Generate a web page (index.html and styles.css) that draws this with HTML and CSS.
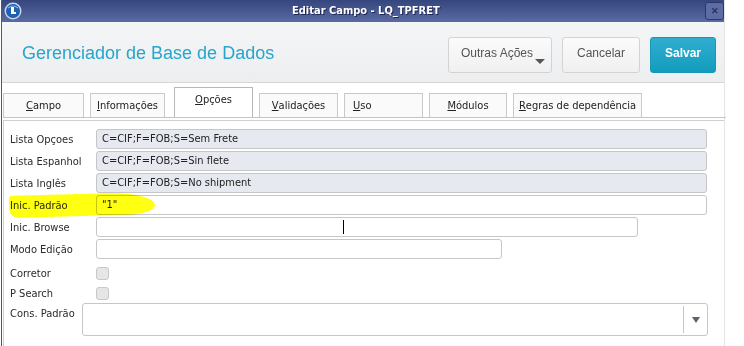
FILE: index.html
```html
<!DOCTYPE html>
<html lang="pt-BR">
<head>
    <meta charset="UTF-8">
    <title>Editar Campo - LQ_TPFRET</title>
    <link rel="stylesheet" href="styles.css">
</head>
<body>
    <div class="window">
        <div class="titlebar">
            <span class="logo">
                <svg width="18" height="18" viewBox="0 0 18 18">
                    <circle cx="9" cy="9" r="8.5" fill="#c9d3e3"/>
                    <circle cx="9" cy="9" r="7" fill="#1d62b0"/>
                    <path d="M4 6 Q9 2 14 6" stroke="#7fb3e8" stroke-width="1.2" fill="none"/>
                    <rect x="7" y="5" width="3" height="7" fill="#fff"/>
                    <rect x="7" y="10" width="5" height="2" fill="#fff"/>
                </svg>
            </span>
            <span class="title">Editar Campo - LQ_TPFRET</span>
            <span class="close">&#x2715;</span>
        </div>

        <div class="header">
            <h1>Gerenciador de Base de Dados</h1>
            <div class="actions">
                <button class="btn btn-more">Outras Ações<span class="caret"></span></button>
                <button class="btn btn-cancel">Cancelar</button>
                <button class="btn btn-save">Salvar</button>
            </div>
        </div>

        <div class="tabs">
            <div class="tab t-campo"><u>C</u>ampo</div>
            <div class="tab t-info"><u>I</u>nformações</div>
            <div class="tab t-opc active"><u>O</u>pções</div>
            <div class="tab t-valid"><u>V</u>alidações</div>
            <div class="tab t-uso"><u>U</u>so</div>
            <div class="tab t-mod"><u>M</u>ódulos</div>
            <div class="tab t-regras"><u>R</u>egras de dependência</div>
        </div>

        <div class="panel">
            <span class="marker"></span>
            <div class="row">
                <label>Lista Opçoes</label>
                <div class="field readonly w-full">C=CIF;F=FOB;S=Sem Frete</div>
            </div>
            <div class="row">
                <label>Lista Espanhol</label>
                <div class="field readonly w-full">C=CIF;F=FOB;S=Sin flete</div>
            </div>
            <div class="row">
                <label>Lista Inglês</label>
                <div class="field readonly w-full">C=CIF;F=FOB;S=No shipment</div>
            </div>
            <div class="row">
                <label>Inic. Padrão</label>
                <div class="field w-full">"1"</div>
            </div>
            <div class="row">
                <label>Inic. Browse</label>
                <div class="field w-browse"><span class="cursor"></span></div>
            </div>
            <div class="row">
                <label>Modo Edição</label>
                <div class="field w-modo"></div>
            </div>
            <div class="row check-row first">
                <label>Corretor</label>
                <span class="checkbox"></span>
            </div>
            <div class="row check-row">
                <label>P Search</label>
                <span class="checkbox"></span>
            </div>
            <div class="row cons-row">
                <label>Cons. Padrão</label>
                <div class="field select">
                    <span class="select-btn"><span class="arrow"></span></span>
                </div>
            </div>
        </div>
    </div>
</body>
</html>
```

FILE: styles.css
```css
body {
    margin: 0;
    background: #fff;
    font-family: 'Liberation Sans', Arial, sans-serif;
    width: 744px;
    height: 346px;
    overflow: hidden;
}

.window {
    width: 722px;
    height: 346px;
    margin-left: 1px;
    border-left: 1px solid #4a5880;
    border-right: 1px solid #e4e4e4;
}

.titlebar {
    height: 22px;
    background: linear-gradient(#35467f, #5a6aa3);
    display: flex;
    align-items: center;
    position: relative;
}

.logo {
    width: 18px;
    height: 18px;
    margin-left: 2px;
    display: flex;
}

.title {
    position: absolute;
    left: 290px;
    top: 4px;
    color: #fff;
    font-family: 'DejaVu Sans Condensed', 'DejaVu Sans', sans-serif;
    font-weight: bold;
    font-size: 11px;
    text-shadow: 1px 1px 0 #1d2650;
}

.close {
    margin-left: auto;
    margin-right: 0;
    width: 19px;
    height: 18px;
    border: 1px solid #2b3768;
    border-radius: 3px;
    background: #5d6ca4;
    color: #2a3150;
    font-size: 9px;
    font-weight: bold;
    display: flex;
    align-items: center;
    justify-content: center;
    box-sizing: border-box;
}

.header {
    height: 60px;
    background: linear-gradient(#f4f5f6, #eceef0);
    border-bottom: 1px solid #d6d6d6;
    display: flex;
    align-items: center;
    justify-content: space-between;
}

.header h1 {
    margin: 0 0 0 20px;
    font-weight: normal;
    font-size: 18px;
    color: #27a5cb;
    padding-top: 2px;
}

.actions {
    display: flex;
    gap: 10px;
    margin-right: 8px;
    padding-top: 5px;
}

.btn {
    height: 36px;
    border: 1px solid #d3d3d3;
    border-radius: 3px;
    background: linear-gradient(#fbfbfb, #f0f0f0);
    color: #555;
    font-family: 'Liberation Sans', Arial, sans-serif;
    font-size: 12px;
    position: relative;
    padding: 0;
}

.btn-more {
    width: 104px;
    padding: 0 18px 3px 0;
    text-align: right;
}

.caret {
    position: absolute;
    right: 6px;
    bottom: 8px;
    border-left: 5px solid transparent;
    border-right: 5px solid transparent;
    border-top: 5px solid #555;
}

.btn-cancel {
    width: 78px;
    padding-bottom: 3px;
}

.btn-save {
    width: 66px;
    border-color: #1898b8;
    background: linear-gradient(#31add0, #129dbd);
    color: #fff;
    font-weight: bold;
    padding-bottom: 3px;
}

.tabs {
    height: 35px;
    margin-left: 1px;
    display: flex;
    align-items: flex-end;
    border-bottom: 1px solid #c4c4c4;
    box-sizing: border-box;
    margin-right: -2px;
}

.tab {
    height: 24px;
    border: 1px solid #c9c9c9;
    border-bottom: none;
    background: #fafafa;
    font-family: 'DejaVu Sans Condensed', 'DejaVu Sans', sans-serif;
    font-size: 11px;
    color: #222;
    display: flex;
    align-items: center;
    justify-content: center;
    box-sizing: border-box;
    margin-right: 6px;
}

.tab.active {
    height: 30px;
    background: #fff;
    align-items: flex-start;
    padding-top: 5px;
    border-color: #b8b8b8;
}

.t-campo { width: 81px; }
.t-info { width: 75px; margin-right: 9px; }
.t-opc { width: 79px; }
.t-valid { width: 79px; }
.t-uso { width: 79px; justify-content: flex-start; padding-left: 8px; }
.t-mod { width: 78px; }
.t-regras { width: 129px; }

.panel {
    position: relative;
    margin: 2px 0 0 1px;
    border-top: 1px solid #cfcfcf;
    border-left: 1px solid #cfcfcf;
    background: #fff;
    padding: 8px 0 0 6px;
    height: 230px;
    display: flex;
    flex-direction: column;
    gap: 2px;
}

.row {
    display: flex;
    align-items: center;
    height: 20px;
    position: relative;
}

.row label {
    width: 86px;
    font-family: 'DejaVu Sans Condensed', 'DejaVu Sans', sans-serif;
    font-size: 11px;
    color: #2a2a2a;
    flex-shrink: 0;
}

.field {
    height: 20px;
    box-sizing: border-box;
    border: 1px solid #c6c6c6;
    border-radius: 3px;
    background: #fff;
    font-family: 'DejaVu Sans Condensed', 'DejaVu Sans', sans-serif;
    font-size: 11px;
    color: #222;
    padding-left: 5px;
    line-height: 18px;
    position: relative;
}

.readonly {
    background: #e6e9f0;
}

.w-full { width: 611px; }
.w-browse { width: 542px; }
.w-modo { width: 406px; }

.cursor {
    position: absolute;
    left: 246px;
    top: 2px;
    width: 1px;
    height: 14px;
    background: #000;
}

.check-row {
    height: 20px;
    margin-top: -2px;
}

.check-row.first {
    margin-top: 2px;
}

.checkbox {
    width: 13px;
    height: 13px;
    box-sizing: border-box;
    border: 1px solid #c8c8c8;
    border-radius: 3px;
    background: #e6e6e6;
}

.cons-row {
    height: 33px;
    align-items: flex-start;
    margin-top: -2px;
}

.cons-row label {
    width: 72px;
    padding-top: 4px;
}

.select {
    width: 626px;
    height: 33px;
}

.select-btn {
    position: absolute;
    right: 0;
    top: 2px;
    bottom: 2px;
    width: 23px;
    border-left: 1px solid #c6c6c6;
    display: flex;
    align-items: center;
    justify-content: center;
}

.arrow {
    border-left: 4px solid transparent;
    border-right: 4px solid transparent;
    border-top: 6px solid #5d6170;
}

.marker {
    position: absolute;
    left: 5px;
    top: 73px;
    width: 146px;
    height: 22px;
    background: #ffff10;
    border-radius: 4px 50px 30px 10px / 4px 14px 10px 10px;
    transform: rotate(-1.5deg);
    mix-blend-mode: multiply;
    z-index: 2;
}
```
